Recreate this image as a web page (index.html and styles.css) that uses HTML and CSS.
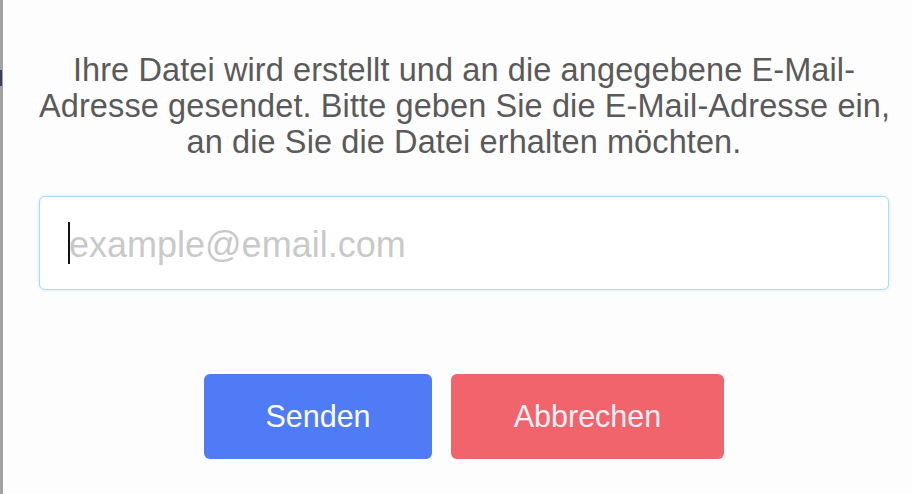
FILE: index.html
```html
<!DOCTYPE html>
<html lang="de">
<head>
<meta charset="utf-8">
<link rel="stylesheet" href="styles.css">
</head>
<body>
<div class="page">
  <div class="edge">
    <span class="edge-mark"></span>
  </div>
  <div class="dialog">
    <p class="message">Ihre Datei wird erstellt und an die angegebene E-Mail-<br>Adresse gesendet. Bitte geben Sie die E-Mail-Adresse ein,<br>an die Sie die Datei erhalten möchten.</p>
    <div class="field">
      <span class="caret"></span>
      <span class="placeholder">example@email.com</span>
    </div>
    <div class="actions">
      <button class="btn btn-send">Senden</button>
      <button class="btn btn-cancel">Abbrechen</button>
    </div>
  </div>
</div>
</body>
</html>
```

FILE: styles.css
```css
* { box-sizing: border-box; }
html, body {
  margin: 0;
  padding: 0;
  width: 912px;
  height: 494px;
  overflow: hidden;
  background: #fdfdfd;
  font-family: "Liberation Sans", Arial, sans-serif;
}
.page {
  display: flex;
  height: 494px;
}
.edge {
  width: 3px;
  background: #a2a2a2;
  position: relative;
  flex: none;
}
.edge-mark {
  position: absolute;
  left: 0;
  top: 70px;
  width: 2px;
  height: 16px;
  background: #3a3f60;
}
.dialog {
  flex: 1;
  padding: 52px 0 0 36px;
}
.message {
  margin: 0;
  width: 850px;
  text-align: center;
  color: #5a5a5a;
  font-size: 32.5px;
  line-height: 36px;
  white-space: nowrap;
  letter-spacing: 0.1px;
}
.field {
  margin-top: 36px;
  width: 850px;
  height: 94px;
  border: 1px solid #a9dcf4;
  border-radius: 6px;
  box-shadow: 0 0 3px rgba(140, 205, 240, 0.5);
  background: #fff;
  display: flex;
  align-items: center;
  padding-left: 28px;
}
.caret {
  width: 2px;
  height: 42px;
  background: #111;
  flex: none;
}
.placeholder {
  color: #c9c9c9;
  font-size: 36px;
  margin-left: -1px;
  margin-top: 3px;
}
.actions {
  margin-top: 84px;
  width: 850px;
  display: flex;
  justify-content: center;
  gap: 19px;
}
.btn {
  border: none;
  border-radius: 6px;
  height: 85px;
  font-family: "Liberation Sans", Arial, sans-serif;
  font-size: 30.5px;
  padding: 0;
}
.btn-send {
  width: 228px;
  background: #4f7bf6;
  color: #fff;
}
.btn-cancel {
  width: 273px;
  background: #f1646c;
  color: #f3f2f8;
}
```
